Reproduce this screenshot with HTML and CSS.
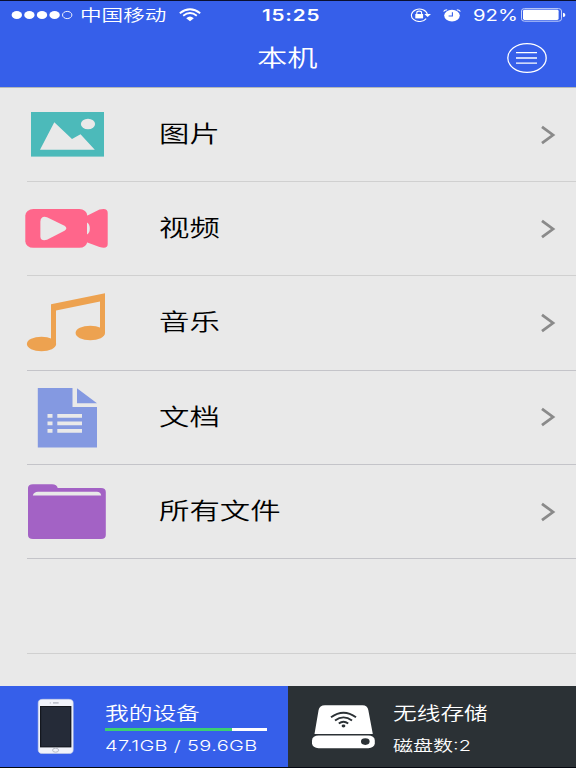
FILE: index.html
```html
<!DOCTYPE html>
<html lang="zh-CN">
<head>
    <meta charset="UTF-8">
    <title>本机</title>
    <link rel="stylesheet" href="styles.css">
</head>
<body>
    <header>
        <div class="status">
            <div class="status-left">
                <svg class="signal" width="62" height="10" viewBox="0 0 62 10">
                    <g fill="#fff">
                        <ellipse cx="5.8" cy="5" rx="5.2" ry="4"/>
                        <ellipse cx="18.4" cy="5" rx="5.2" ry="4"/>
                        <ellipse cx="31" cy="5" rx="5.2" ry="4"/>
                        <ellipse cx="43.6" cy="5" rx="5.2" ry="4"/>
                    </g>
                    <ellipse cx="56.2" cy="5" rx="4.7" ry="3.6" fill="none" stroke="#fff" stroke-width="0.9"/>
                </svg>
                <span class="carrier wide">中国移动</span>
                <svg class="wifi" width="22" height="14" viewBox="0 0 22 14">
                    <g fill="none" stroke="#fff" stroke-width="1.9">
                        <path d="M0.8 5.2Q11 -2.6 21.2 5.2"/>
                        <path d="M4.2 7.8Q11 2.4 17.8 7.8"/>
                    </g>
                    <path d="M7.2 10.2Q11 7 14.8 10.2L11 13.2Z" fill="#fff"/>
                </svg>
            </div>
            <span class="time wide">15:25</span>
            <div class="status-right">
                <svg class="lock" width="22" height="14" viewBox="0 0 22 14">
                    <path d="M16.2 10.6A8 6.2 0 1 1 17.3 6.2" fill="none" stroke="#fff" stroke-width="1.1"/>
                    <path d="M14.3 6H21L17.6 9Z" fill="#fff"/>
                    <rect x="5.3" y="6" width="7.8" height="4.4" fill="#fff"/>
                    <path d="M6.8 6.2V4.8A2.4 1.7 0 0 1 11.6 4.8V6.2" fill="none" stroke="#fff" stroke-width="1.1"/>
                </svg>
                <svg class="alarm" width="18" height="13" viewBox="0 0 18 13">
                    <ellipse cx="9" cy="6.6" rx="7.8" ry="5.8" fill="#fff"/>
                    <path d="M0.6 2.6Q1.6 0.8 4.2 0.7M17.4 2.6Q16.4 0.8 13.8 0.7" fill="none" stroke="#fff" stroke-width="1.1"/>
                    <path d="M9.4 3.2V7H5.6" fill="none" stroke="#365fea" stroke-width="1.1"/>
                </svg>
                <span class="percent wide">92%</span>
                <svg class="battery" width="45" height="14" viewBox="0 0 45 14">
                    <rect x="0.5" y="0.6" width="40" height="12.6" rx="3" ry="2.4" fill="none" stroke="#c3cff9" stroke-width="1"/>
                    <rect x="2" y="1.8" width="35.6" height="10.2" rx="1.4" fill="#fff"/>
                    <path d="M42 4.8Q44.4 5 44.4 6.9Q44.4 8.8 42 9Z" fill="#fff"/>
                </svg>
            </div>
        </div>
        <div class="title-bar">
            <h1 class="wide">本机</h1>
            <svg class="menu" width="42" height="32" viewBox="0 0 42 32">
                <ellipse cx="21" cy="16" rx="19.2" ry="14.4" fill="none" stroke="#fff" stroke-width="1.3"/>
                <path d="M10 10.6H31M10 16H31M10 21.2H31" stroke="#fff" stroke-width="1.3"/>
            </svg>
        </div>
    </header>

    <ul class="list">
        <li class="row light">
            <svg class="icon" width="112" height="93" viewBox="0 0 112 93">
                <rect x="31" y="24" width="73" height="44.6" fill="#4cbaba"/>
                <path d="M40 61.8L54.3 34.3L72 51L80.5 46.3L94.8 61.8Z" fill="#e9e9e9"/>
                <ellipse cx="88" cy="36" rx="7.1" ry="5.3" fill="#e9e9e9"/>
            </svg>
            <span class="label wide">图片</span>
            <svg class="arrow" width="16" height="22" viewBox="0 0 16 22"><path d="M2 2.8L13 11L2 19.2"/></svg>
        </li>
        <li class="row light">
            <svg class="icon" width="112" height="93" viewBox="0 0 112 93">
                <g fill="#ff668b">
                    <rect x="25.3" y="27" width="62" height="38.8" rx="8" ry="6.5"/>
                    <path d="M86 34.3L99.5 27.6Q107.7 25.5 107.7 31V62Q107.7 67.5 99.5 65L86 60Z"/>
                </g>
                <path d="M87 40.5Q89.8 42 89.8 46.5Q89.8 51 87 52.5Z" fill="#e9e9e9"/>
                <path d="M40.4 39.5Q40.8 33.6 47 35.2L64.5 43.8Q68.2 46.4 64.5 48.8L47 57.8Q41 59.4 40.4 55Z" fill="#e9e9e9"/>
            </svg>
            <span class="label wide">视频</span>
            <svg class="arrow" width="16" height="22" viewBox="0 0 16 22"><path d="M2 2.8L13 11L2 19.2"/></svg>
        </li>
        <li class="row">
            <svg class="icon" width="112" height="93" viewBox="0 0 112 93">
                <g fill="#eda250">
                    <path d="M51 28.2L105 17.2V57H100V25.4L56 34.6V68H51Z"/>
                    <ellipse cx="41.5" cy="68" rx="14.6" ry="7.3"/>
                    <ellipse cx="90.3" cy="57" rx="14.7" ry="7.3"/>
                </g>
            </svg>
            <span class="label wide">音乐</span>
            <svg class="arrow" width="16" height="22" viewBox="0 0 16 22"><path d="M2 2.8L13 11L2 19.2"/></svg>
        </li>
        <li class="row">
            <svg class="icon" width="112" height="93" viewBox="0 0 112 93">
                <path d="M37.8 17H72.5V36H97V76.4H37.8ZM77 17.2L97 32.2H77Z" fill="#8499e1"/>
                <path d="M47.5 44.9H52.5M47.5 52.4H52.5M47.5 59.8H52.5M57.3 44.9H82M57.3 52.4H82M57.3 59.8H82" stroke="#e9e9e9" stroke-width="3.8"/>
            </svg>
            <span class="label wide">文档</span>
            <svg class="arrow" width="16" height="22" viewBox="0 0 16 22"><path d="M2 2.8L13 11L2 19.2"/></svg>
        </li>
        <li class="row">
            <svg class="icon" width="112" height="93" viewBox="0 0 112 93">
                <path d="M28 23Q28 19.2 33 19.2H52Q57 19.2 57.7 23H101Q105.8 23 105.8 27V70Q105.8 74 101 74H33Q28 74 28 70Z" fill="#a362c5"/>
                <path d="M32.8 30.5Q34 26.8 38 26.8H97Q100.5 26.8 101.2 30.5Z" fill="#e9e9e9"/>
            </svg>
            <span class="label wide">所有文件</span>
            <svg class="arrow" width="16" height="22" viewBox="0 0 16 22"><path d="M2 2.8L13 11L2 19.2"/></svg>
        </li>
        <li class="row light"></li>
    </ul>

    <footer>
        <div class="tab active">
            <svg class="device" width="105" height="81" viewBox="0 0 105 81">
                <rect x="38.2" y="13.3" width="35" height="54.2" rx="4.5" ry="3.6" fill="#f1f3fa" stroke="#c9d0e6" stroke-width="0.6"/>
                <rect x="40" y="20" width="31.4" height="41.4" fill="#14171e"/>
                <rect x="41.2" y="21" width="29" height="39.4" fill="#252b38"/>
                <path d="M53 16.9H58.6" stroke="#a9acb8" stroke-width="1.2"/>
                <circle cx="50.3" cy="16.9" r="0.6" fill="#b5b8c4"/>
                <ellipse cx="55.6" cy="64.2" rx="3" ry="2" fill="none" stroke="#b2b5c0" stroke-width="0.9"/>
            </svg>
            <div class="info">
                <span class="name wide">我的设备</span>
                <div class="bar"><div class="used" style="width: 78.6%"></div></div>
                <span class="detail storage wide">47.1GB / 59.6GB</span>
            </div>
        </div>
        <div class="tab">
            <svg class="device" width="105" height="81" viewBox="0 0 105 81">
                <g fill="#fff">
                    <path d="M26.5 48L30.6 24Q31.5 19.3 37 19.3H74.5Q79.5 19.3 80.3 24L84.8 48Z"/>
                    <rect x="24" y="49.4" width="62.8" height="12.8" rx="6.5" ry="5"/>
                </g>
                <ellipse cx="77.3" cy="55.6" rx="4.3" ry="3.3" fill="#2b3135"/>
                <g fill="none" stroke="#2b3135" stroke-width="1.9">
                    <path d="M43 31.3Q55.5 22.3 68 31.3"/>
                    <path d="M47 34.6Q55.5 28.2 64 34.6"/>
                    <path d="M50.8 37.6Q55.5 34 60.2 37.6"/>
                </g>
                <ellipse cx="55.5" cy="40" rx="1.9" ry="1.4" fill="#2b3135"/>
            </svg>
            <div class="info">
                <span class="name wide">无线存储</span>
                <div class="bar hidden"></div>
                <span class="detail wide">磁盘数:2</span>
            </div>
        </div>
    </footer>
</body>
</html>
```
FILE: styles.css
```css
* {
    box-sizing: border-box;
    margin: 0;
    padding: 0;
}

body {
    width: 576px;
    height: 768px;
    display: flex;
    flex-direction: column;
    overflow: hidden;
    background: #e9e9e9;
    color: #000;
    font-family: Inter, 'Noto Sans CJK SC', sans-serif;
}

svg {
    display: block;
    flex: none;
}

/* all text is drawn a third wider than normal */
.wide {
    display: inline-block;
    white-space: nowrap;
    transform: scaleX(1.333);
    transform-origin: left center;
}

header {
    height: 88px;
    flex: none;
    background: #365fea;
    border-top: 1px solid #0a1030;
    border-bottom: 1px solid #b4b8b8;
    color: #fff;
}

.status {
    height: 28px;
    display: grid;
    grid-template-columns: 1fr 60px 1fr;
    align-items: center;
}

.status-left,
.status-right {
    display: flex;
    align-items: center;
}

.status-left {
    padding-left: 11px;
}

.carrier {
    width: 86px;
    margin-left: 7px;
    padding-bottom: 2px;
    font-size: 16.2px;
    font-weight: 350;
}

.wifi {
    margin-left: 13px;
}

.time {
    font-size: 15.5px;
    font-weight: 600;
    letter-spacing: 0.6px;
    padding-left: 3px;
}

.status-right {
    justify-content: flex-end;
    padding-right: 10px;
}

.alarm {
    margin-left: 11px;
}

.percent {
    width: 44px;
    margin: 0 4px 0 12px;
    font-size: 15.2px;
}

.title-bar {
    height: 58px;
    display: grid;
    grid-template-columns: 257px 1fr 70px;
    align-items: center;
}

h1 {
    grid-column: 2;
    padding-bottom: 4px;
    font-size: 22.7px;
    font-weight: 350;
}

.list {
    flex: 1;
    list-style: none;
}

.row {
    height: 94.33px;
    display: flex;
    align-items: center;
    background: linear-gradient(#c4c4c9, #c4c4c9) 27px 100% / 100% 1px no-repeat;
}

.row.light {
    background-image: linear-gradient(#d0d0d0, #d0d0d0);
}

.row:first-child {
    height: 94px;
}

.icon {
    align-self: flex-start;
}

.label {
    margin-left: 47px;
    padding-bottom: 5px;
    font-size: 22.8px;
    font-weight: 350;
}

.arrow {
    margin: 0 20px 1px auto;
    fill: none;
    stroke: #8a8a8a;
    stroke-width: 2.8;
}

footer {
    height: 82px;
    flex: none;
    display: grid;
    grid-template-columns: 1fr 1fr;
    border-bottom: 1px solid #05080f;
    color: #fff;
}

.tab {
    display: flex;
    background: #2b3135;
}

.tab.active {
    background: #365fea;
}

.info {
    padding-top: 14px;
    width: 162px;
}

/* kept narrow so the widened text stays inside the tab */
.name,
.detail {
    display: block;
    width: 120px;
    height: 28px;
    font-weight: 350;
}

.name {
    line-height: 27px;
    font-size: 17.8px;
}

.bar {
    height: 3px;
    background: #fff;
}

.bar.hidden {
    visibility: hidden;
}

.used {
    height: 3px;
    background: #3bcf72;
}

.detail {
    line-height: 29px;
    font-size: 15px;
}

.storage {
    letter-spacing: 0.25px;
}
```
